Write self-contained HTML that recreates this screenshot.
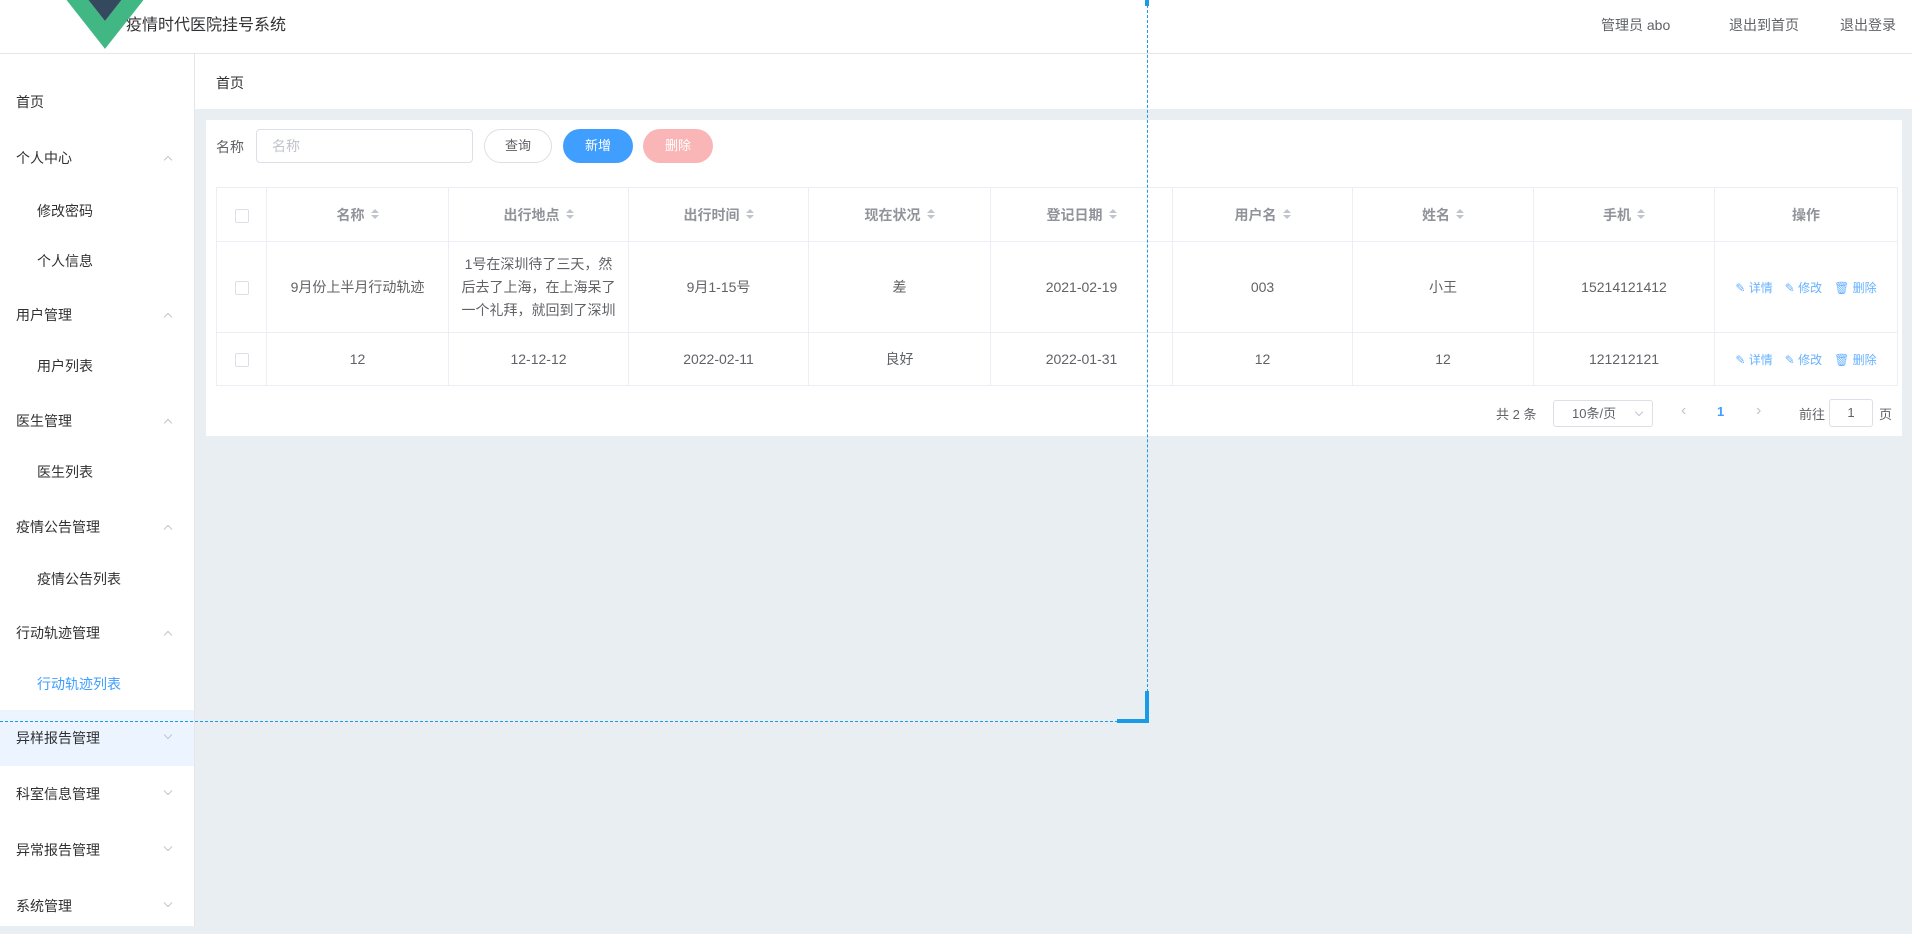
<!DOCTYPE html>
<html><head><meta charset="utf-8"><style>
*{box-sizing:border-box;margin:0;padding:0}
body{width:1912px;height:926px;overflow:hidden;background:#e9eef3;font-family:"Liberation Sans","Noto Sans CJK SC",sans-serif;font-size:14px;color:#303133;position:relative}
.abs{position:absolute}
#hdr{left:0;top:0;width:1912px;height:54px;background:#fff;border-bottom:1px solid #e6e6e6}
#side{left:0;top:54px;width:195px;height:872px;background:#fff;border-right:1px solid #e6e6e6}
.mi{position:absolute;left:0;width:194px;height:46px;line-height:46px;font-size:14px;color:#303133}
.mi.top{padding-left:16px}
.mi.sub{padding-left:37px}
.chev{position:absolute;left:165px;width:6px;height:6px;border-left:1px solid #c0c4cc;border-top:1px solid #c0c4cc}
#bc{left:195px;top:54px;width:1717px;height:55px;background:#fff}
#card{left:206px;top:120px;width:1696px;height:316px;background:#fff}
.btn{position:absolute;top:129px;height:34px;border-radius:17px;font-size:13px;text-align:center;line-height:32px}
table{border-collapse:collapse;table-layout:fixed;position:absolute;left:216px;top:187px;width:1681px}
td,th{border:1px solid #ebeef5;text-align:center;font-size:14px;color:#606266;font-weight:normal}
th{color:#909399;font-weight:bold;height:54px}
.sort{display:inline-block;width:8px;height:12px;vertical-align:-1px;margin-left:6px;position:relative}
.sort:before{content:"";position:absolute;left:0;top:0;border:4px solid transparent;border-bottom:4px solid #c0c4cc;border-top:0}
.sort:after{content:"";position:absolute;left:0;top:6px;border:4px solid transparent;border-top:4px solid #c0c4cc;border-bottom:0}
.cb{display:inline-block;width:14px;height:14px;border:1px solid #dcdfe6;border-radius:2px;vertical-align:middle}
.op{color:#409eff;font-size:12px;margin:0 6px;opacity:.8}
</style></head><body>
<div id="hdr" class="abs">
<svg class="abs" style="left:50px;top:-21px" width="110" height="70" viewBox="0 0 256 221" preserveAspectRatio="none"><path d="M0 0L128 220.8L256 0H204.8L128 132.48L50.56 0Z" fill="#41b883"/><path d="M50.56 0L128 132.48L204.8 0H157.44L128 51.2L97.92 0Z" fill="#35495e"/></svg>
<div class="abs" style="left:126px;top:15px;font-size:16px;color:#303133;line-height:22px">疫情时代医院挂号系统</div>
<div class="abs" style="left:1601px;top:15px;color:#606266">管理员 abo</div>
<div class="abs" style="left:1729px;top:15px;color:#606266">退出到首页</div>
<div class="abs" style="left:1840px;top:15px;color:#606266">退出登录</div>
</div>
<div id="side" class="abs">
<div class="mi top" style="top:25px">首页</div>
<div class="mi top" style="top:81px">个人中心<i class="chev" style="top:22px;transform:rotate(45deg)"></i></div>
<div class="mi sub" style="top:134px">修改密码</div>
<div class="mi sub" style="top:184px">个人信息</div>
<div class="mi top" style="top:238px">用户管理<i class="chev" style="top:22px;transform:rotate(45deg)"></i></div>
<div class="mi sub" style="top:289px">用户列表</div>
<div class="mi top" style="top:344px">医生管理<i class="chev" style="top:22px;transform:rotate(45deg)"></i></div>
<div class="mi sub" style="top:395px">医生列表</div>
<div class="mi top" style="top:450px">疫情公告管理<i class="chev" style="top:22px;transform:rotate(45deg)"></i></div>
<div class="mi sub" style="top:502px">疫情公告列表</div>
<div class="mi top" style="top:556px">行动轨迹管理<i class="chev" style="top:22px;transform:rotate(45deg)"></i></div>
<div class="mi sub" style="top:607px;color:#409eff">行动轨迹列表</div>
<div class="mi top" style="top:656px;height:56px;line-height:56px;background:#ecf5ff">异样报告管理<i class="chev" style="top:22px;transform:rotate(225deg)"></i></div>
<div class="mi top" style="top:712px;height:56px;line-height:56px">科室信息管理<i class="chev" style="top:22px;transform:rotate(225deg)"></i></div>
<div class="mi top" style="top:768px;height:56px;line-height:56px">异常报告管理<i class="chev" style="top:22px;transform:rotate(225deg)"></i></div>
<div class="mi top" style="top:824px;height:56px;line-height:56px">系统管理<i class="chev" style="top:22px;transform:rotate(225deg)"></i></div>
</div>
<div id="bc" class="abs"><div class="abs" style="left:21px;top:19px;font-size:14px;color:#303133">首页</div></div>
<div id="card" class="abs"></div>
<div class="abs" style="left:216px;top:137px;color:#606266">名称</div>
<div class="abs" style="left:256px;top:129px;width:217px;height:34px;border:1px solid #dcdfe6;border-radius:4px;padding-left:15px;line-height:32px;color:#c0c4cc">名称</div>
<div class="btn" style="left:484px;width:68px;border:1px solid #dcdfe6;color:#606266;background:#fff">查询</div>
<div class="btn" style="left:563px;width:70px;background:#409eff;color:#fff;line-height:34px">新增</div>
<div class="btn" style="left:643px;width:70px;background:#fab6b6;color:#fff;line-height:34px">删除</div>
<table>
<colgroup><col style="width:50px"><col style="width:182px"><col style="width:180px"><col style="width:180px"><col style="width:182px"><col style="width:182px"><col style="width:180px"><col style="width:181px"><col style="width:181px"><col style="width:183px"></colgroup>
<tr><th><span class="cb"></span></th><th>名称<i class="sort"></i></th><th>出行地点<i class="sort"></i></th><th>出行时间<i class="sort"></i></th><th>现在状况<i class="sort"></i></th><th>登记日期<i class="sort"></i></th><th>用户名<i class="sort"></i></th><th>姓名<i class="sort"></i></th><th>手机<i class="sort"></i></th><th>操作</th></tr>
<tr style="height:91px"><td><span class="cb"></span></td><td>9月份上半月行动轨迹</td><td style="line-height:23px;padding:0 10px">1号在深圳待了三天，然后去了上海，在上海呆了一个礼拜，就回到了深圳</td><td>9月1-15号</td><td>差</td><td>2021-02-19</td><td>003</td><td>小王</td><td>15214121412</td><td style="white-space:nowrap"><span class="op">✎ 详情</span><span class="op">✎ 修改</span><span class="op">🗑 删除</span></td></tr>
<tr style="height:53px"><td><span class="cb"></span></td><td>12</td><td>12-12-12</td><td>2022-02-11</td><td>良好</td><td>2022-01-31</td><td>12</td><td>12</td><td>121212121</td><td style="white-space:nowrap"><span class="op">✎ 详情</span><span class="op">✎ 修改</span><span class="op">🗑 删除</span></td></tr>
</table>
<div class="abs" style="left:1496px;top:404px;font-size:13px;color:#606266">共 2 条</div>
<div class="abs" style="left:1553px;top:400px;width:100px;height:27px;border:1px solid #dcdfe6;border-radius:3px;font-size:13px;color:#606266;line-height:25px;padding-left:18px">10条/页<i style="position:absolute;left:82px;top:8px;width:6px;height:6px;border-right:1px solid #c0c4cc;border-bottom:1px solid #c0c4cc;transform:rotate(45deg)"></i></div>
<div class="abs" style="left:1681px;top:402px;color:#c0c4cc;font-size:16px">‹</div>
<div class="abs" style="left:1717px;top:404px;color:#409eff;font-size:13px;font-weight:bold">1</div>
<div class="abs" style="left:1756px;top:402px;color:#c0c4cc;font-size:16px">›</div>
<div class="abs" style="left:1799px;top:404px;font-size:13px;color:#606266">前往</div>
<div class="abs" style="left:1829px;top:399px;width:44px;height:28px;border:1px solid #dcdfe6;border-radius:3px;text-align:center;line-height:26px;font-size:13px;color:#606266">1</div>
<div class="abs" style="left:1879px;top:404px;font-size:13px;color:#606266">页</div>
<div class="abs" style="left:1147px;top:0;width:0;height:722px;border-left:1px dashed #1a9be6"></div>
<div class="abs" style="left:0;top:721px;width:1148px;height:0;border-top:1px dashed #1a9be6"></div>
<div class="abs" style="left:1145px;top:0;width:4px;height:6px;background:#1a9be6"></div>
<div class="abs" style="left:1145px;top:691px;width:4px;height:32px;background:#1a9be6"></div>
<div class="abs" style="left:1117px;top:719px;width:32px;height:4px;background:#1a9be6"></div>
</body></html>
